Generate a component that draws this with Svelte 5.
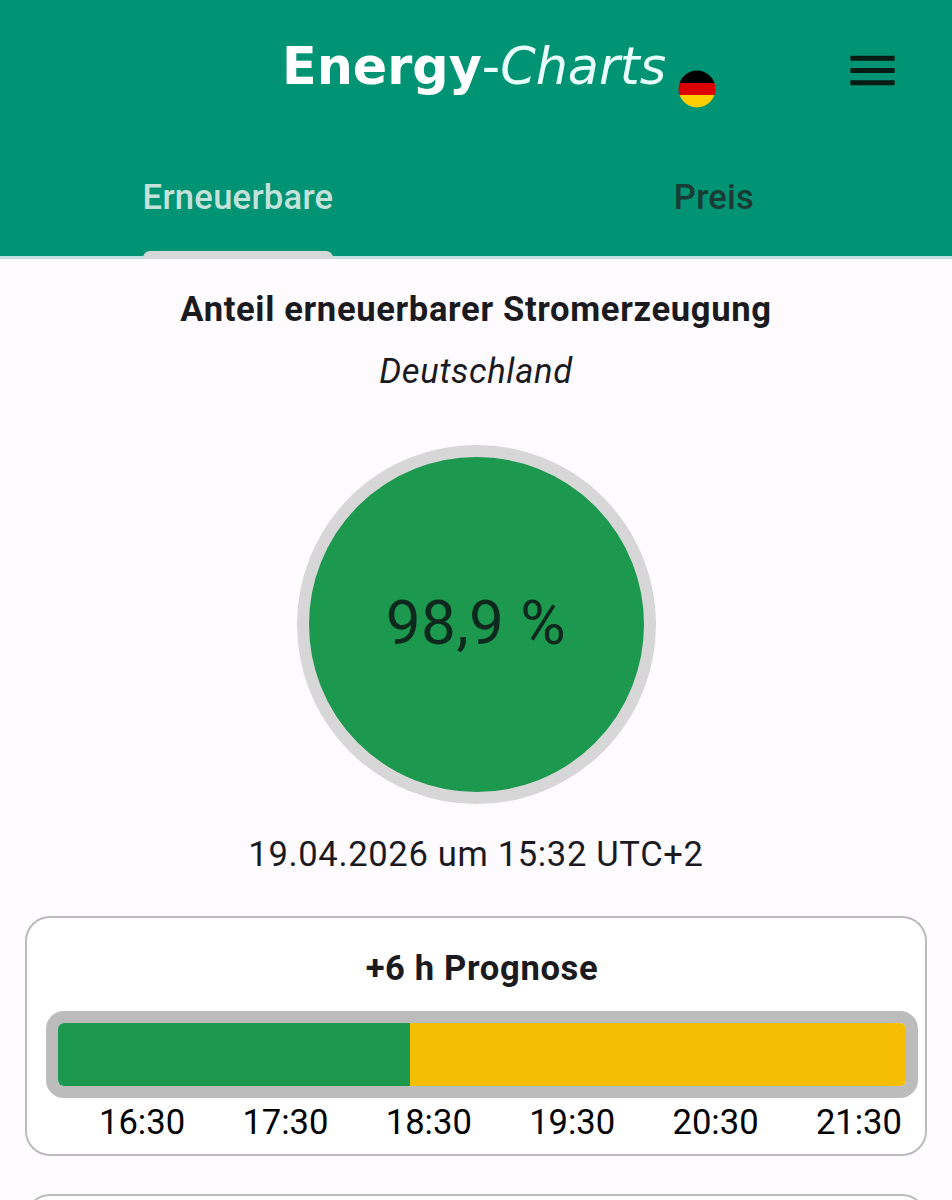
<script>
	let active = $state('Erneuerbare');

	const tabs = ['Erneuerbare', 'Preis'];
	const share = '98,9 %';
	const hours = ['16:30', '17:30', '18:30', '19:30', '20:30', '21:30'];
	const forecast = [
		{ color: '#1d984f', width: 41.5 },
		{ color: '#f5be02', width: 58.5 }
	];
</script>

<div class="app">
	<header>
		<div class="toolbar">
			<div class="logo"><b>Energy</b><span>-</span><i>Charts</i></div>
			<svg class="flag" viewBox="0 0 38 38" role="img" aria-label="Deutschland">
				<clipPath id="round"><circle cx="19" cy="19" r="18.5" /></clipPath>
				<g clip-path="url(#round)">
					<rect width="38" height="13" fill="#000" />
					<rect y="13" width="38" height="12" fill="#d00" />
					<rect y="25" width="38" height="13" fill="#ffce00" />
				</g>
			</svg>
			<button class="menu" aria-label="Menü">
				<svg viewBox="0 0 24 24"><path d="M3 18h18v-2H3v2zm0-5h18v-2H3v2zm0-7v2h18V6H3z" fill="#041c14" /></svg>
			</button>
		</div>
		<nav>
			{#each tabs as tab}
				<button class="tab" class:active={tab === active} onclick={() => (active = tab)}>
					<span>{tab}</span>
				</button>
			{/each}
		</nav>
	</header>

	<main>
		<h1>Anteil erneuerbarer Stromerzeugung</h1>
		<p class="country">Deutschland</p>
		<div class="circle"><span>{share}</span></div>
		<p class="time">19.04.2026 um 15:32 UTC+2</p>

		<section class="card">
			<h2>+6 h Prognose</h2>
			<div class="bar">
				{#each forecast as part}
					<div style="width: {part.width}%; background: {part.color}"></div>
				{/each}
			</div>
			<div class="hours">
				{#each hours as hour}
					<span>{hour}</span>
				{/each}
			</div>
		</section>
		<section class="card next"></section>
	</main>
</div>

<style>
	:global(body) {
		background: #fefbff;
	}

	.app {
		width: 952px;
		height: 1200px;
		overflow: hidden;
		background: #fefbff;
		color: #1b1b1f;
		font-family: Roboto, sans-serif;
		font-size: 34.6px;
	}

	h1,
	h2,
	p {
		margin: 0;
	}

	button {
		padding: 0;
		border: 0;
		background: none;
		font: inherit;
	}

	header {
		height: 256px;
		background: #009374;
		border-bottom: 3px solid #c3dde0;
	}

	.toolbar {
		display: flex;
		height: 138px;
		padding-left: 282px;
		box-sizing: border-box;
	}

	.logo {
		width: 396px;
		padding-top: 37px;
		color: #e9fffb;
		font-family: 'DejaVu Sans', sans-serif;
		font-size: 50.8px;
		line-height: 60px;
		white-space: nowrap;
	}

	.logo b {
		color: #fff;
	}

	.flag {
		width: 38px;
		height: 38px;
		margin-top: 70px;
	}

	.menu {
		width: 59px;
		height: 59px;
		margin: 41px 0 0 127px;
	}

	.menu svg {
		display: block;
		width: 59px;
		height: 59px;
	}

	nav {
		display: flex;
		height: 121px;
	}

	.tab {
		flex: 1;
		display: flex;
		justify-content: center;
		color: #1a3b34;
		font-weight: 500;
		letter-spacing: 0.25px;
	}

	.tab span {
		display: flex;
		flex-direction: column;
		justify-content: space-between;
		height: 121px;
		box-sizing: border-box;
		padding-top: 38px;
		line-height: 42px;
	}

	.tab.active span {
		color: #c5e2da;
	}

	.tab.active span::after {
		content: '';
		height: 8px;
		border-radius: 7px 7px 0 0;
		background: #d4d8d7;
	}

	main {
		display: flex;
		flex-direction: column;
		align-items: center;
		padding: 29px 25px 0;
	}

	h1,
	h2 {
		font-size: 34.6px;
		line-height: 42px;
		font-weight: 700;
		letter-spacing: 0.65px;
	}

	.country {
		margin-top: 20px;
		line-height: 42px;
		font-style: italic;
		letter-spacing: 0.65px;
	}

	.circle {
		display: flex;
		align-items: center;
		justify-content: center;
		width: 335px;
		height: 335px;
		margin-top: 53px;
		border: 12px solid #d7d7d7;
		border-radius: 50%;
		background: #1d984f;
		color: #0d281c;
		font-size: 62px;
		letter-spacing: 0.5px;
	}

	.circle span {
		padding-bottom: 5px;
	}

	.time {
		margin-top: 29px;
		line-height: 42px;
		letter-spacing: 0.65px;
	}

	.card {
		align-self: stretch;
		height: 240px;
		margin-top: 41px;
		padding: 29px 7px 0 19px;
		box-sizing: border-box;
		border: 2px solid #bbb;
		border-radius: 25px;
		background: #fff;
	}

	.card.next {
		margin-top: 38px;
	}

	h2 {
		text-align: center;
	}

	.bar {
		display: flex;
		height: 63px;
		margin-top: 22px;
		border: 12px solid #bbbcbb;
		border-radius: 18px;
		overflow: hidden;
	}

	.hours {
		display: flex;
		justify-content: space-between;
		padding: 3px 16px 0 53px;
		color: #000;
		line-height: 42px;
	}
</style>
